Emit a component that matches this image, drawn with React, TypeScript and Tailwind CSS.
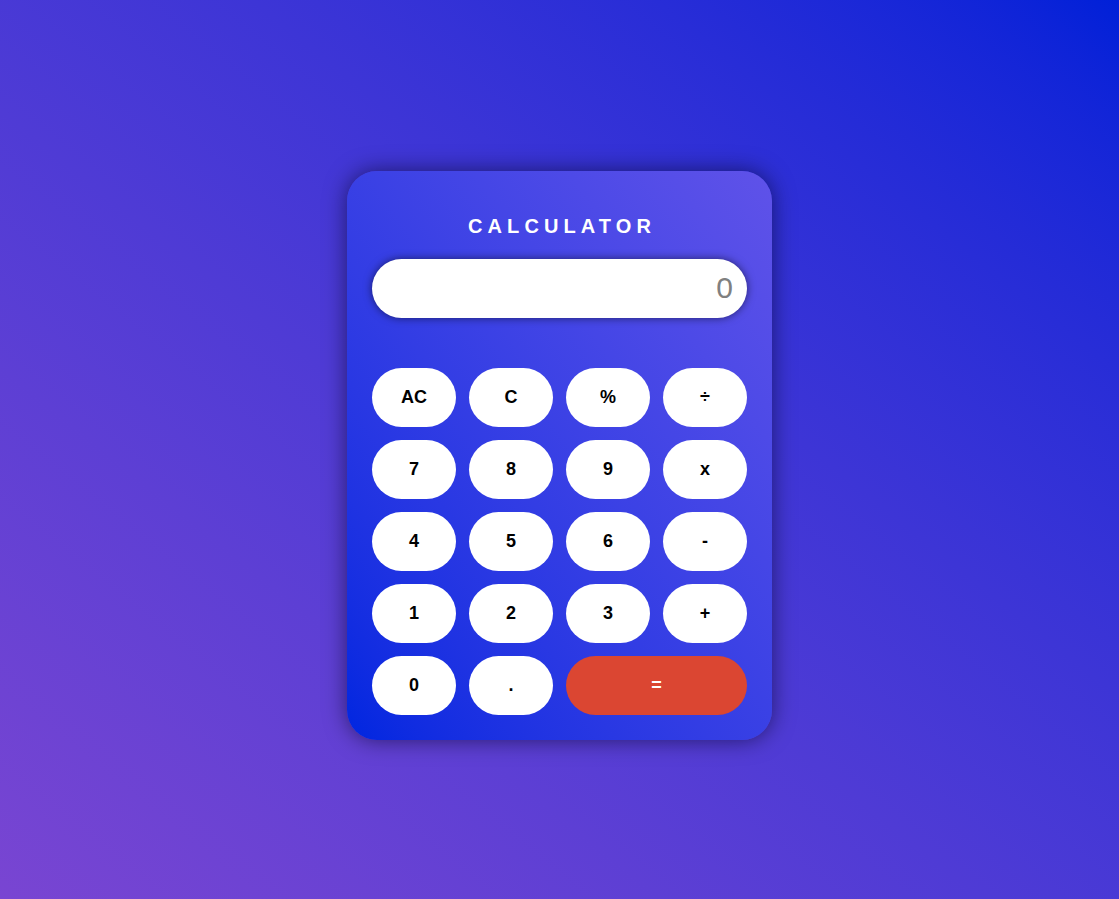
import React from "react";

const keys = ["AC", "C", "%", "÷", "7", "8", "9", "x", "4", "5", "6", "-", "1", "2", "3", "+", "0", "."];

export default function App() {
  return (
    <div className="min-h-screen w-full flex justify-center pt-[171px] bg-gradient-to-tr from-[#7945d2] to-[#0020d8] font-['Liberation_Sans',Arial,sans-serif]">
      <div className="w-[425px] h-[569px] rounded-[30px] px-[25px] pb-[25px] bg-gradient-to-tr from-[#0026e0] to-[#5f52e9] shadow-[0_0_22px_rgba(0,0,20,0.55)]">
        <div className="h-[88px] flex items-center justify-center pt-[23px] pb-[2px]">
          <h1 className="text-white font-bold text-[20px] tracking-[5.1px] pl-[5px]">CALCULATOR</h1>
        </div>
        <div className="h-[59px] rounded-full bg-white shadow-[0_0_8px_rgba(0,0,0,0.55)] flex items-center justify-end px-[14px]">
          <span className="text-[30px] text-[#808080] -mt-[2px]">0</span>
        </div>
        <div className="mt-[50px] grid grid-cols-4 gap-[13px]">
          {keys.map((k) => (
            <button key={k} className="h-[59px] rounded-full bg-white text-black font-bold text-[18px]">
              {k}
            </button>
          ))}
          <button className="col-span-2 h-[59px] rounded-full bg-[#db4632] text-white font-bold text-[18px]">=</button>
        </div>
      </div>
    </div>
  );
}
